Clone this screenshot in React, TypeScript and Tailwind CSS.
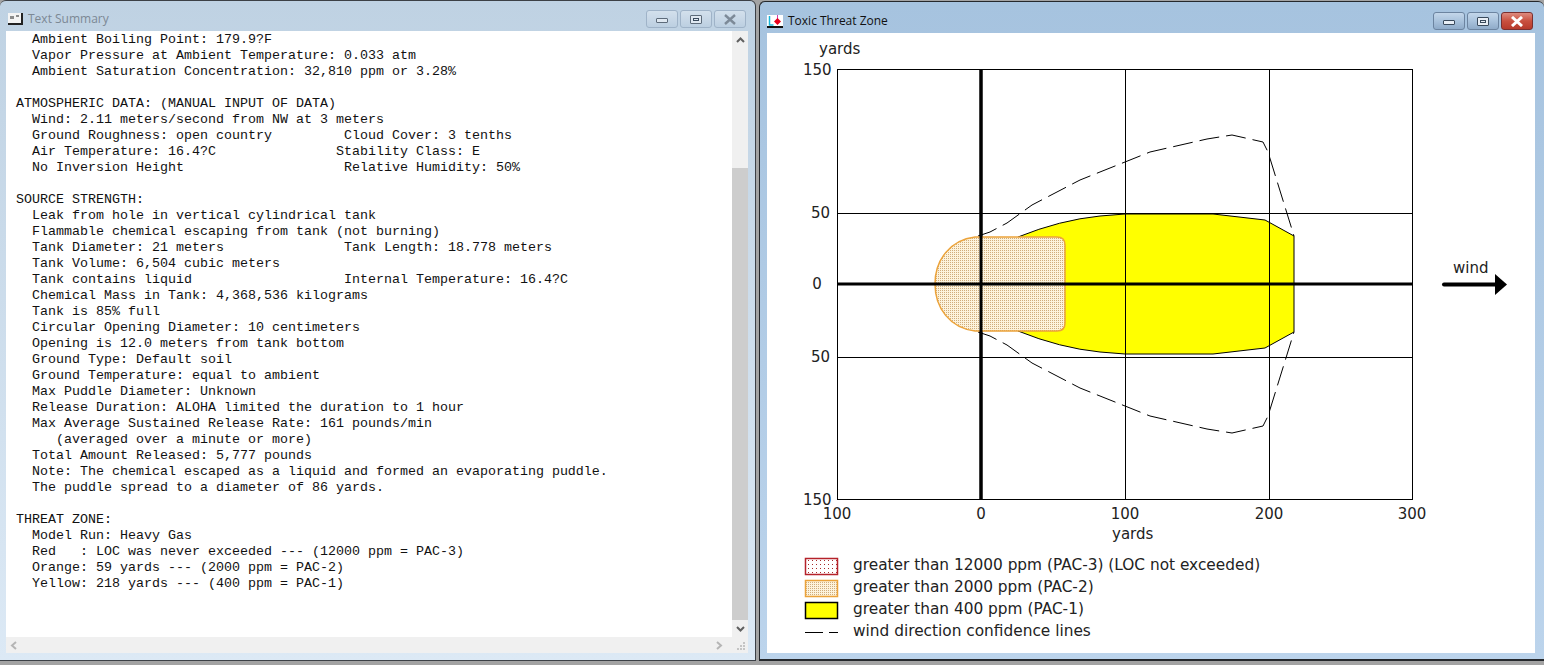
const summary = [
  "  Ambient Boiling Point: 179.9?F",
  "  Vapor Pressure at Ambient Temperature: 0.033 atm",
  "  Ambient Saturation Concentration: 32,810 ppm or 3.28%",
  "",
  "ATMOSPHERIC DATA: (MANUAL INPUT OF DATA)",
  "  Wind: 2.11 meters/second from NW at 3 meters",
  "  Ground Roughness: open country         Cloud Cover: 3 tenths",
  "  Air Temperature: 16.4?C               Stability Class: E",
  "  No Inversion Height                    Relative Humidity: 50%",
  "",
  "SOURCE STRENGTH:",
  "  Leak from hole in vertical cylindrical tank",
  "  Flammable chemical escaping from tank (not burning)",
  "  Tank Diameter: 21 meters               Tank Length: 18.778 meters",
  "  Tank Volume: 6,504 cubic meters",
  "  Tank contains liquid                   Internal Temperature: 16.4?C",
  "  Chemical Mass in Tank: 4,368,536 kilograms",
  "  Tank is 85% full",
  "  Circular Opening Diameter: 10 centimeters",
  "  Opening is 12.0 meters from tank bottom",
  "  Ground Type: Default soil",
  "  Ground Temperature: equal to ambient",
  "  Max Puddle Diameter: Unknown",
  "  Release Duration: ALOHA limited the duration to 1 hour",
  "  Max Average Sustained Release Rate: 161 pounds/min",
  "     (averaged over a minute or more)",
  "  Total Amount Released: 5,777 pounds",
  "  Note: The chemical escaped as a liquid and formed an evaporating puddle.",
  "  The puddle spread to a diameter of 86 yards.",
  "",
  "THREAT ZONE:",
  "  Model Run: Heavy Gas",
  "  Red   : LOC was never exceeded --- (12000 ppm = PAC-3)",
  "  Orange: 59 yards --- (2000 ppm = PAC-2)",
  "  Yellow: 218 yards --- (400 ppm = PAC-1)",
];

const legend = [
  { y: 570, label: "greater than 12000 ppm (PAC-3) (LOC not exceeded)" },
  { y: 592, label: "greater than 2000 ppm (PAC-2)" },
  { y: 614, label: "greater than 400 ppm (PAC-1)" },
  { y: 636, label: "wind direction confidence lines" },
];

function WinButtons({ active }: { active: boolean }) {
  const base = active
    ? "border-[#6c84a0] bg-gradient-to-b from-[#c3d6ea] via-[#a9c2dc] to-[#8fabc9]"
    : "border-[#9fb3c8] bg-gradient-to-b from-[#d3e0ec] to-[#bccfe1]";
  const glyph = active ? "border-[#3a4a5c] bg-[#e8eef5]" : "border-[#5d6b7a] bg-[#dfe8f1]";
  return (
    <div className="flex gap-[2px]">
      <div className={`flex h-[18px] w-[32px] items-center justify-center rounded-[3px] border ${base}`}>
        <div className={`mt-[3px] h-[5px] w-[12px] rounded-[1px] border ${glyph}`} />
      </div>
      <div className={`flex h-[18px] w-[32px] items-center justify-center rounded-[3px] border ${base}`}>
        <div className={`flex h-[9px] w-[12px] items-center justify-center rounded-[1px] border ${glyph}`}>
          <div className="h-[3px] w-[6px] border border-[#3a4a5c]" />
        </div>
      </div>
      <div
        className={`flex h-[18px] w-[32px] items-center justify-center rounded-[3px] border ${
          active
            ? "border-[#7a3030] bg-gradient-to-b from-[#dd8a7e] via-[#c9503f] to-[#b73a2b]"
            : base
        }`}
      >
        <svg width="14" height="11" viewBox="0 0 14 11">
          <path
            d="M2 1 L12 10 M12 1 L2 10"
            stroke={active ? "#ffffff" : "#7d8a98"}
            strokeWidth={active ? 3 : 2.4}
            fill="none"
          />
        </svg>
      </div>
    </div>
  );
}

function TextIcon() {
  return (
    <svg width="15" height="13" viewBox="0 0 15 13" className="shrink-0">
      <rect x="0" y="0" width="15" height="12" fill="#f4f4f4" />
      <rect x="0" y="10" width="15" height="2" fill="#222" />
      <rect x="13" y="0" width="2" height="12" fill="#222" />
      <path d="M3 3v3M5 3v3M8 3h3" stroke="#222" strokeWidth="1" />
    </svg>
  );
}

function ToxicIcon() {
  return (
    <svg width="16" height="13" viewBox="0 0 16 13" className="shrink-0">
      <rect x="0" y="0" width="16" height="12" fill="#ffffff" />
      <path d="M2.5 1v9h4" stroke="#19b5d8" strokeWidth="1.5" fill="none" />
      <path d="M10.5 0v4" stroke="#d23bb0" strokeWidth="1" />
      <path d="M10.5 3 L14 6.5 L10.5 10 L7 6.5 Z" fill="#e8001c" />
      <rect x="0" y="11" width="16" height="2" fill="#111" />
    </svg>
  );
}

function ThreatChart() {
  const text = "fill-[#222] text-[15px] [font-family:'DejaVu_Sans',sans-serif]";
  const legendText = "fill-[#222] text-[15.35px] [font-family:'DejaVu_Sans',sans-serif]";
  return (
    <svg viewBox="767 33 768 620" className="block h-full w-full">
      <defs>
        <pattern id="dots-orange" width="2" height="2" patternUnits="userSpaceOnUse">
          <rect width="2" height="2" fill="#fdf3dc" />
          <rect width="1" height="1" fill="#d0ac7c" />
        </pattern>
        <pattern id="dots-red" width="4" height="4" patternUnits="userSpaceOnUse">
          <rect width="4" height="4" fill="#ffffff" />
          <rect width="1" height="1" fill="#a82a2a" />
        </pattern>
      </defs>

      <rect x="837.5" y="69.5" width="575" height="430" fill="#fff" stroke="#000" />

      {/* yellow zone */}
      <path
        d="M1018 237 Q1060 220 1100 216 L1125 214 L1213 214 L1265 220 L1294 236 L1294 332 L1265 348 L1213 354 L1125 354 L1100 352 Q1060 348 1018 331 Z"
        fill="#ffff00"
        stroke="#000"
      />

      {/* grid */}
      <path d="M1125.5 69V500M1269.5 69V500M837 213.5H1412M837 357.5H1412" stroke="#000" fill="none" />
      <path d="M981 69V500" stroke="#000" strokeWidth="3" />

      {/* confidence lines */}
      <path
        d="M978 236 L990 232 L1007 223 L1032 205 L1080 180 L1150 152 L1207 139 L1232 135 L1263 142 L1268 152 L1294 236"
        fill="none"
        stroke="#000"
        strokeDasharray="20 7"
      />
      <path
        d="M978 332 L990 336 L1007 345 L1032 363 L1080 388 L1150 416 L1207 429 L1232 433 L1263 426 L1268 416 L1294 332"
        fill="none"
        stroke="#000"
        strokeDasharray="20 7"
      />

      {/* orange zone */}
      <path
        d="M1057 237 Q1065 237 1065 245 L1065 323 Q1065 331 1057 331 L975 331 C950 328 935 308 935 284 C935 260 950 240 975 237 Z"
        fill="url(#dots-orange)"
        stroke="#eca33a"
        strokeWidth="1.5"
      />

      <path d="M837 284H1412" stroke="#000" strokeWidth="3" />
      <path d="M981 69V500" stroke="#000" strokeWidth="3" />

      {/* axis labels */}
      <text x="819" y="54" className={text}>yards</text>
      <text x="803" y="75" className={text}>150</text>
      <text x="811" y="218" className={text}>50</text>
      <text x="817" y="289" textAnchor="middle" className={text}>0</text>
      <text x="811" y="362" className={text}>50</text>
      <text x="803" y="505" className={text}>150</text>
      <text x="837" y="519" textAnchor="middle" className={text}>100</text>
      <text x="981" y="519" textAnchor="middle" className={text}>0</text>
      <text x="1125" y="519" textAnchor="middle" className={text}>100</text>
      <text x="1269" y="519" textAnchor="middle" className={text}>200</text>
      <text x="1412" y="519" textAnchor="middle" className={text}>300</text>
      <text x="1112" y="539" className={text}>yards</text>

      {/* wind arrow */}
      <text x="1453" y="273" className={text}>wind</text>
      <path d="M1444 284.5H1497" stroke="#000" strokeWidth="4" strokeLinecap="round" />
      <path d="M1495 274 L1507 284.5 L1495 295 Z" fill="#000" />

      {/* legend */}
      <rect x="805.5" y="558.5" width="32" height="16" fill="url(#dots-red)" stroke="#b5222a" strokeWidth="1.5" />
      <rect x="805.5" y="580.5" width="32" height="16" fill="url(#dots-orange)" stroke="#eca33a" strokeWidth="1.5" />
      <rect x="805.5" y="602.5" width="32" height="16" fill="#ffff00" stroke="#000" strokeWidth="1.5" />
      <path d="M805 632.5H823M829 632.5H838" stroke="#000" />
      {legend.map((l) => (
        <text key={l.y} x="853" y={l.y} className={legendText}>
          {l.label}
        </text>
      ))}
    </svg>
  );
}

export default function App() {
  return (
    <div className="flex h-[665px] w-[1544px] items-start overflow-hidden bg-[#a3a3a3] [font-family:'Open_Sans',sans-serif]">
      {/* Text Summary window */}
      <div className="flex h-[661px] w-[756px] flex-col rounded-t-[6px] border-t border-r border-b border-[#3c4046] bg-gradient-to-b from-[#bfd2e3] to-[#dce9f5] pr-[7px] pb-[7px] pl-[6px]">
        <div className="flex h-[30px] shrink-0 items-center gap-[5px] px-[2px] pt-[6px]">
          <TextIcon />
          <span className="text-[12px] text-[#7c8894]">Text Summary</span>
          <div className="ml-auto">
            <WinButtons active={false} />
          </div>
        </div>
        <div className="flex min-h-0 flex-1 flex-col bg-white">
          <div className="flex min-h-0 flex-1">
            <pre className="flex-1 overflow-hidden pt-[1px] pl-[10px] text-[13.33px] leading-[16px] text-[#111] [font-family:'Liberation_Mono',monospace]">
              {summary.join("\n")}
            </pre>
            <div className="flex w-[16px] shrink-0 flex-col bg-[#f0f0f0]">
              <div className="flex h-[17px] items-center justify-center text-[#606060]">
                <svg width="9" height="6" viewBox="0 0 9 6">
                  <path d="M1 5 L4.5 1.5 L8 5" stroke="currentColor" strokeWidth="2" fill="none" />
                </svg>
              </div>
              <div className="h-[120px]" />
              <div className="flex-1 bg-[#cdcdcd]" />
              <div className="flex h-[17px] items-center justify-center text-[#606060]">
                <svg width="9" height="6" viewBox="0 0 9 6">
                  <path d="M1 1 L4.5 4.5 L8 1" stroke="currentColor" strokeWidth="2" fill="none" />
                </svg>
              </div>
            </div>
          </div>
          <div className="flex h-[16px] shrink-0 items-center justify-between bg-[#f0f0f0] text-[#b5b5b5]">
            <svg width="17" height="9" viewBox="0 0 17 9">
              <path d="M10 1 L6 4.5 L10 8" stroke="currentColor" strokeWidth="2" fill="none" />
            </svg>
            <div className="flex items-center gap-[8px]">
              <svg width="9" height="9" viewBox="0 0 9 9">
                <path d="M2 1 L6 4.5 L2 8" stroke="currentColor" strokeWidth="2" fill="none" />
              </svg>
              <svg width="16" height="16" viewBox="0 0 16 16">
                <path d="M11 5h2v2h-2zM8 8h2v2H8zM11 8h2v2h-2zM5 11h2v2H5zM8 11h2v2H8zM11 11h2v2h-2z" fill="#c4c4c4" />
              </svg>
            </div>
          </div>
        </div>
      </div>

      {/* Toxic Threat Zone window */}
      <div className="mt-[1px] ml-[3px] flex h-[660px] flex-1 flex-col rounded-t-[6px] border-t border-l border-b-2 border-[#25282c] bg-gradient-to-b from-[#a6c3df] to-[#bcd4ec] pr-[9px] pb-[6px] pl-[7px]">
        <div className="flex h-[31px] shrink-0 items-center gap-[5px] pt-[7px] pr-[2px]">
          <ToxicIcon />
          <span className="text-[12px] text-[#111]">Toxic Threat Zone</span>
          <div className="ml-auto">
            <WinButtons active />
          </div>
        </div>
        <div className="min-h-0 flex-1 bg-white">
          <ThreatChart />
        </div>
      </div>
    </div>
  );
}
